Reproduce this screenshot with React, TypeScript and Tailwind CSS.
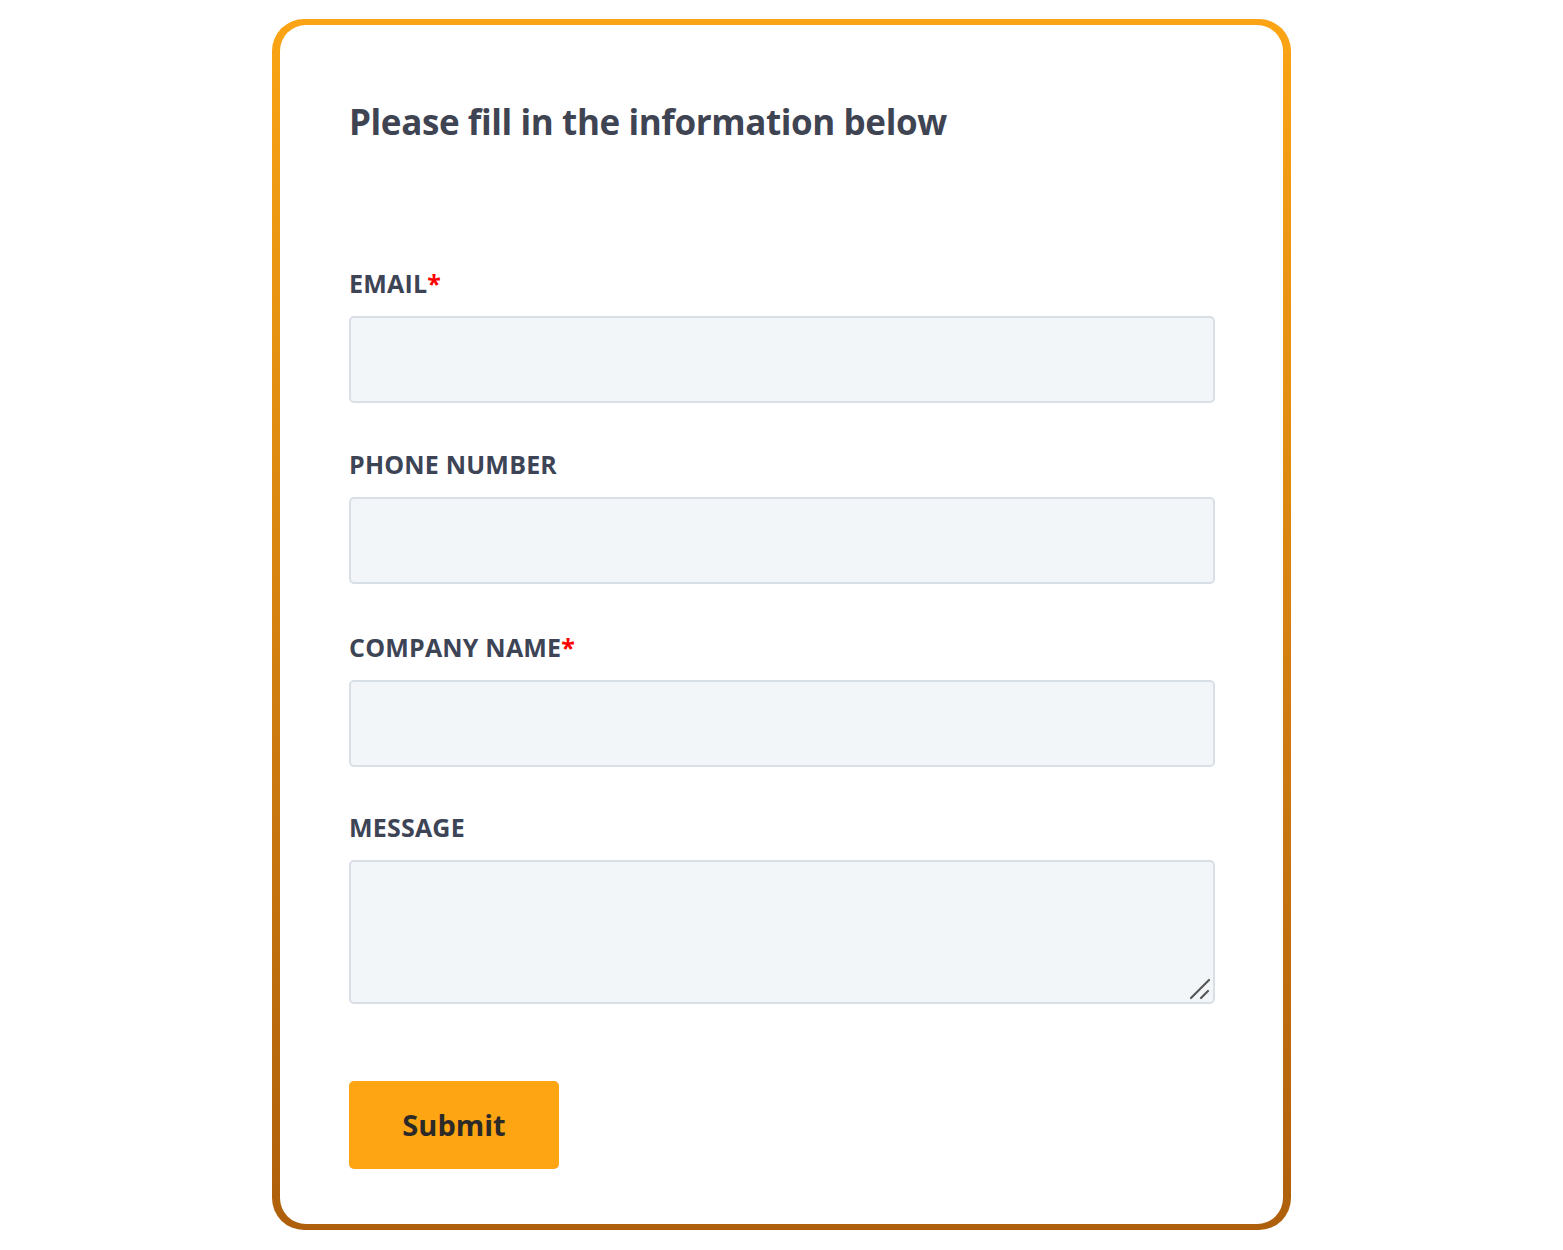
import { useState } from 'react';

const fieldClass =
  'w-full h-[87px] rounded-[5px] border-2 border-[#d9dfe7] bg-[#f3f6f9] px-4 outline-none';

function Label({ text, required }: { text: string; required?: boolean }) {
  return (
    <label className="block text-[25px] leading-[30px] font-bold text-[#3d4455] mb-[18px] tracking-[0.2px]">
      {text}
      {required && <span className="text-[#ff0000]">*</span>}
    </label>
  );
}

export default function App() {
  const [values, setValues] = useState({ email: '', phone: '', company: '', message: '' });

  const update = (key: keyof typeof values) => (e: { target: { value: string } }) =>
    setValues({ ...values, [key]: e.target.value });

  return (
    <div className="min-h-screen bg-white pt-[19px] font-['Open_Sans',sans-serif]">
      <div className="mx-auto w-[1019px] rounded-[32px] bg-gradient-to-b from-[#faa415] to-[#ae5f0b] px-[8px] pt-[6px] pb-[6px]">
        <div className="rounded-[26px] bg-white pl-[69px] pr-[68px] pt-[76px] pb-[55px]">
          <h1 className="text-[35px] leading-[42px] font-bold text-[#3f4453] tracking-[-0.4px]">
            Please fill in the information below
          </h1>

          <form className="mt-[125px]" onSubmit={(e) => e.preventDefault()}>
            <div className="mb-[46px]">
              <Label text="EMAIL" required />
              <input type="email" className={fieldClass} value={values.email} onChange={update('email')} />
            </div>

            <div className="mb-[48px]">
              <Label text="PHONE NUMBER" />
              <input type="tel" className={fieldClass} value={values.phone} onChange={update('phone')} />
            </div>

            <div className="mb-[45px]">
              <Label text="COMPANY NAME" required />
              <input type="text" className={fieldClass} value={values.company} onChange={update('company')} />
            </div>

            <div>
              <Label text="MESSAGE" />
              <div className="relative">
                <textarea
                  className="block w-full h-[144px] resize-none rounded-[5px] border-2 border-[#d9dfe7] bg-[#f3f6f9] px-4 py-3 outline-none"
                  value={values.message}
                  onChange={update('message')}
                />
                {/* resize grip */}
                <svg
                  className="absolute right-[4px] bottom-[4px] pointer-events-none"
                  width="22"
                  height="22"
                  viewBox="0 0 22 22"
                >
                  <line x1="2" y1="20" x2="20" y2="2" stroke="#555" strokeWidth="2.2" strokeLinecap="round" />
                  <line x1="12" y1="20" x2="19" y2="13" stroke="#555" strokeWidth="2.2" strokeLinecap="round" />
                </svg>
              </div>
            </div>

            <button
              type="submit"
              className="mt-[77px] w-[210px] h-[88px] rounded-[5px] bg-[#fea514] text-[29px] font-bold text-[#2b2a28]"
            >
              Submit
            </button>
          </form>
        </div>
      </div>
    </div>
  );
}
